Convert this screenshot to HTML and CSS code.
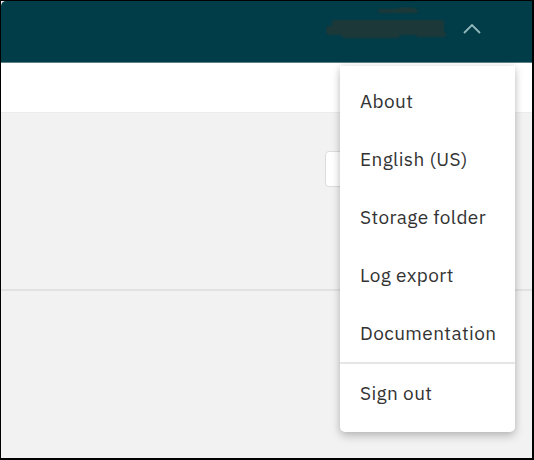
FILE: index.html
```html
<!DOCTYPE html>
<html>
<head>
<meta charset="utf-8">
<link rel="stylesheet" href="styles.css">
</head>
<body>
<div class="frame">
  <header class="topbar">
    <div class="user">
      <svg class="redact" width="124" height="40" viewBox="0 0 124 40">
        <defs><filter id="b" x="-10%" y="-50%" width="120%" height="200%"><feGaussianBlur stdDeviation="0.8"/></filter></defs>
        <g fill="#1b3838" filter="url(#b)">
          <rect x="52" y="2" width="40" height="4" rx="2"/>
          <rect x="72" y="0" width="16" height="3" rx="1.5"/>
          <rect x="6" y="13" width="112" height="10" rx="3"/>
          <rect x="0" y="19" width="118" height="9" rx="3"/>
          <rect x="16" y="27" width="58" height="4" rx="2"/>
          <rect x="90" y="25" width="30" height="5" rx="2"/>
        </g>
      </svg>
      <svg class="chev" width="20" height="12" viewBox="0 0 20 12">
        <path d="M2 10 L10 2 L18 10" fill="none" stroke="#93b9bd" stroke-width="1.8"/>
      </svg>
    </div>
  </header>
  <div class="subbar"></div>
  <main class="content">
    <div class="toolbar"><div class="field"></div></div>
    <div class="rule"></div>
  </main>
  <div class="menu">
    <div class="item">About</div>
    <div class="item">English (US)</div>
    <div class="item">Storage folder</div>
    <div class="item">Log export</div>
    <div class="item">Documentation</div>
    <div class="sep"></div>
    <div class="item">Sign out</div>
  </div>
</div>
</body>
</html>
```
FILE: styles.css
```css
html, body {
  margin: 0;
  padding: 0;
  background: #fff;
}
.frame {
  position: relative;
  width: 534px;
  height: 460px;
  box-sizing: border-box;
  border: 1px solid #000;
  border-right-width: 2px;
  border-bottom-width: 2px;
  background: #f2f2f2;
  display: flex;
  flex-direction: column;
  overflow: hidden;
  font-family: "IBM Plex Sans", "Noto Sans", "Open Sans", sans-serif;
}
.topbar {
  height: 61px;
  flex: none;
  background: #013d49;
  border-top-left-radius: 5px;
  border-bottom: 1px solid #5f7f86;
  display: flex;
  justify-content: flex-end;
  align-items: flex-start;
}
.user {
  display: flex;
  align-items: flex-start;
  margin-right: 50px;
  margin-top: 6px;
}
.redact {
  display: block;
}
.chev {
  display: block;
  margin-left: 12px;
  margin-top: 16px;
}
.subbar {
  height: 49px;
  flex: none;
  background: #fff;
  border-bottom: 1px solid #ececec;
}
.content {
  flex: 1;
  display: flex;
  flex-direction: column;
}
.toolbar {
  height: 176px;
  display: flex;
  justify-content: flex-end;
  align-items: flex-start;
  padding-top: 38px;
  box-sizing: border-box;
}
.field {
  width: 180px;
  height: 34px;
  background: #fff;
  border: 1px solid #dcdcdc;
  border-radius: 4px;
  margin-right: 25px;
}
.rule {
  height: 2px;
  background: #e2e2e2;
}
.menu {
  position: absolute;
  left: 339px;
  top: 65px;
  width: 175px;
  box-sizing: border-box;
  padding: 6px 0 10px;
  background: #fff;
  border-radius: 0 0 5px 5px;
  box-shadow: 0 4px 10px rgba(0, 0, 0, 0.22), 0 0 6px rgba(0, 0, 0, 0.08);
}
.item {
  height: 58px;
  display: flex;
  align-items: center;
  padding-left: 20px;
  font-size: 19px;
  letter-spacing: 0.4px;
  color: #333;
}
.sep {
  height: 2px;
  background: #e6e6e6;
}
```
